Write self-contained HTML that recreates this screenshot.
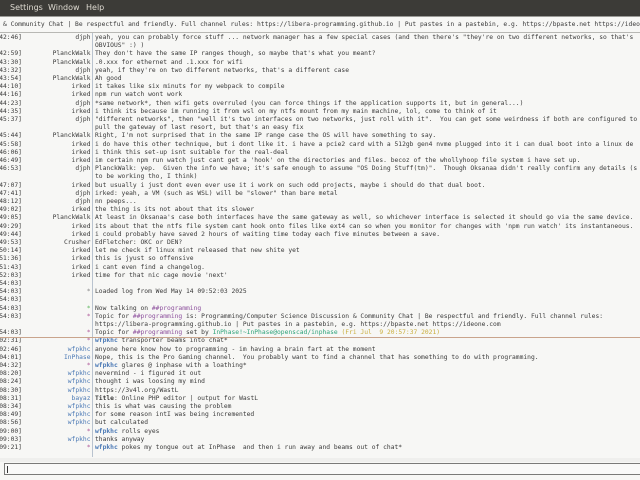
<!DOCTYPE html>
<html><head><meta charset="utf-8"><style>
*{margin:0;padding:0;box-sizing:border-box}
body{width:640px;height:480px;overflow:hidden;background:#f7f7f5;position:relative;font-family:"DejaVu Sans Mono","Liberation Mono",monospace;font-size:6.3px;color:#3a3a3a}
#menu{position:absolute;left:0;top:0;width:640px;height:16px;background:#3c3b37;color:#dfdbd2;font-family:"DejaVu Sans","Liberation Sans",sans-serif;font-size:8px;line-height:16px;white-space:nowrap}
#menu span{position:absolute;top:0}
#topic{position:absolute;left:0;top:16px;width:640px;height:17px;background:#f7f7f5;border-top:1px solid #9a9a96;border-bottom:1px solid #b8b8b4;line-height:15px;padding-left:3px;white-space:nowrap;overflow:hidden}
#div{position:absolute;left:92px;top:33px;width:1px;height:424px;background:#b9c3cf}
.r{position:absolute;left:0;height:8.2px;line-height:8.2px;white-space:pre;width:640px}
.t{position:absolute;left:-4.6px}
.n{position:absolute;right:549.5px;text-align:right}
.m{position:absolute;left:95px}
.b{color:#4b79b5}.bb{color:#4b79b5;font-weight:bold}
.p{color:#8c4f9c}.g{color:#2ea37a}.y{color:#c9ad3c}.gs{color:#5fb75f}.ps{color:#b05a9a}.gr{color:#888}
#marker{position:absolute;left:0;top:336.5px;width:640px;height:1px;background:#c9a48c}
#input{position:absolute;left:4px;top:463px;width:640px;height:12px;border:1px solid #7a7a78;border-right:none;background:#f9f9f8}
#input:before{content:"";position:absolute;left:2px;top:2px;width:1px;height:7px;background:#333}
#bot{position:absolute;left:0;top:458px;width:640px;height:4px;background:#efefed}
</style></head><body>
<div id="menu"><span style="left:-4px">r</span><span style="left:10px">Settings</span><span style="left:48px">Window</span><span style="left:86px">Help</span></div>
<div id="topic">&amp; Community Chat | Be respectful and friendly. Full channel rules: https://libera-programming.github.io | Put pastes in a pastebin, e.g. https://bpaste.net https://ideone.com</div>
<div id="div"></div>
<div id="rows">
<div class="r" style="top:34px"><span class="t">[42:46]</span><span class="n">djph</span><span class="m">yeah, you can probably force stuff ... network manager has a few special cases (and then there's "they're on two different networks, so that's</span></div>
<div class="r" style="top:42.2px"><span class="m">OBVIOUS" :) )</span></div>
<div class="r" style="top:50.4px"><span class="t">[42:59]</span><span class="n">PlanckWalk</span><span class="m">They don't have the same IP ranges though, so maybe that's what you meant?</span></div>
<div class="r" style="top:58.6px"><span class="t">[43:30]</span><span class="n">PlanckWalk</span><span class="m">.0.xxx for ethernet and .1.xxx for wifi</span></div>
<div class="r" style="top:66.8px"><span class="t">[43:32]</span><span class="n">djph</span><span class="m">yeah, if they're on two different networks, that's a different case</span></div>
<div class="r" style="top:75px"><span class="t">[43:54]</span><span class="n">PlanckWalk</span><span class="m">Ah good</span></div>
<div class="r" style="top:83.2px"><span class="t">[44:10]</span><span class="n">irked</span><span class="m">it takes like six minuts for my webpack to compile</span></div>
<div class="r" style="top:91.4px"><span class="t">[44:16]</span><span class="n">irked</span><span class="m">npm run watch wont work</span></div>
<div class="r" style="top:99.6px"><span class="t">[44:23]</span><span class="n">djph</span><span class="m">*same network*, then wifi gets overruled (you can force things if the application supports it, but in general...)</span></div>
<div class="r" style="top:107.8px"><span class="t">[44:35]</span><span class="n">irked</span><span class="m">i think its because im running it from wsl on my ntfs mount from my main machine, lol, come to think of it</span></div>
<div class="r" style="top:116px"><span class="t">[45:37]</span><span class="n">djph</span><span class="m">"different networks", then "well it's two interfaces on two networks, just roll with it".  You can get some weirdness if both are configured to</span></div>
<div class="r" style="top:124.2px"><span class="m">pull the gateway of last resort, but that's an easy fix</span></div>
<div class="r" style="top:132.4px"><span class="t">[45:44]</span><span class="n">PlanckWalk</span><span class="m">Right, I'm not surprised that in the same IP range case the OS will have something to say.</span></div>
<div class="r" style="top:140.6px"><span class="t">[45:58]</span><span class="n">irked</span><span class="m">i do have this other technique, but i dont like it. i have a pcie2 card with a 512gb gen4 nvme plugged into it i can dual boot into a linux de</span></div>
<div class="r" style="top:148.8px"><span class="t">[46:06]</span><span class="n">irked</span><span class="m">i think this set-up isnt suitable for the real-deal</span></div>
<div class="r" style="top:157px"><span class="t">[46:49]</span><span class="n">irked</span><span class="m">im certain npm run watch just cant get a 'hook' on the directories and files. becoz of the whollyhoop file system i have set up.</span></div>
<div class="r" style="top:165.2px"><span class="t">[46:53]</span><span class="n">djph</span><span class="m">PlanckWalk: yep.  Given the info we have; it's safe enough to assume "OS Doing Stuff(tm)".  Though Oksanaa didn't really confirm any details (s</span></div>
<div class="r" style="top:173.4px"><span class="m">to be working tho, I think)</span></div>
<div class="r" style="top:181.6px"><span class="t">[47:07]</span><span class="n">irked</span><span class="m">but usually i just dont even ever use it i work on such odd projects, maybe i should do that dual boot.</span></div>
<div class="r" style="top:189.8px"><span class="t">[47:41]</span><span class="n">djph</span><span class="m">irked: yeah, a VM (such as WSL) will be "slower" than bare metal</span></div>
<div class="r" style="top:198px"><span class="t">[48:12]</span><span class="n">djph</span><span class="m">nn peeps...</span></div>
<div class="r" style="top:206.2px"><span class="t">[49:02]</span><span class="n">irked</span><span class="m">the thing is its not about that its slower</span></div>
<div class="r" style="top:214.4px"><span class="t">[49:05]</span><span class="n">PlanckWalk</span><span class="m">At least in Oksanaa's case both interfaces have the same gateway as well, so whichever interface is selected it should go via the same device.</span></div>
<div class="r" style="top:222.6px"><span class="t">[49:29]</span><span class="n">irked</span><span class="m">its about that the ntfs file system cant hook onto files like ext4 can so when you monitor for changes with 'npm run watch' its instantaneous.</span></div>
<div class="r" style="top:230.8px"><span class="t">[49:44]</span><span class="n">irked</span><span class="m">i could probably have saved 2 hours of waiting time today each five minutes between a save.</span></div>
<div class="r" style="top:239px"><span class="t">[49:53]</span><span class="n">Crusher</span><span class="m">EdFletcher: OKC or DEN?</span></div>
<div class="r" style="top:247.2px"><span class="t">[50:14]</span><span class="n">irked</span><span class="m">let me check if linux mint released that new shite yet</span></div>
<div class="r" style="top:255.4px"><span class="t">[51:36]</span><span class="n">irked</span><span class="m">this is jyust so offensive</span></div>
<div class="r" style="top:263.6px"><span class="t">[51:43]</span><span class="n">irked</span><span class="m">i cant even find a changelog.</span></div>
<div class="r" style="top:271.8px"><span class="t">[52:03]</span><span class="n">irked</span><span class="m">time for that nic cage movie 'next'</span></div>
<div class="r" style="top:280px"><span class="t">[54:03]</span></div>
<div class="r" style="top:288.2px"><span class="t">[54:03]</span><span class="n gr">*</span><span class="m">Loaded log from Wed May 14 09:52:03 2025</span></div>
<div class="r" style="top:296.4px"><span class="t">[54:03]</span></div>
<div class="r" style="top:304.6px"><span class="t">[54:03]</span><span class="n gs">*</span><span class="m">Now talking on <span class="p">##programming</span></span></div>
<div class="r" style="top:312.8px"><span class="t">[54:03]</span><span class="n ps">*</span><span class="m">Topic for <span class="p">##programming</span> is: Programming/Computer Science Discussion &amp; Community Chat | Be respectful and friendly. Full channel rules:</span></div>
<div class="r" style="top:321px"><span class="m">https://libera-programming.github.io | Put pastes in a pastebin, e.g. https://bpaste.net https://ideone.com</span></div>
<div class="r" style="top:329.2px"><span class="t">[54:03]</span><span class="n ps">*</span><span class="m">Topic for <span class="p">##programming</span> set by <span class="g">InPhase!~InPhase@openscad/inphase</span> <span class="y">(Fri Jul  9 20:57:37 2021)</span></span></div>
<div class="r" style="top:337.4px"><span class="t">[02:31]</span><span class="n ps">*</span><span class="m"><span class="bb">wfpkhc</span> transporter beams into chat*</span></div>
<div class="r" style="top:345.6px"><span class="t">[02:46]</span><span class="n b">wfpkhc</span><span class="m">anyone here know how to programming - im having a brain fart at the moment</span></div>
<div class="r" style="top:353.8px"><span class="t">[04:01]</span><span class="n b">InPhase</span><span class="m">Nope, this is the Pro Gaming channel.  You probably want to find a channel that has something to do with programming.</span></div>
<div class="r" style="top:362px"><span class="t">[04:32]</span><span class="n ps">*</span><span class="m"><span class="bb">wfpkhc</span> glares @ inphase with a loathing*</span></div>
<div class="r" style="top:370.2px"><span class="t">[08:20]</span><span class="n b">wfpkhc</span><span class="m">nevermind - i figured it out</span></div>
<div class="r" style="top:378.4px"><span class="t">[08:24]</span><span class="n b">wfpkhc</span><span class="m">thought i was loosing my mind</span></div>
<div class="r" style="top:386.6px"><span class="t">[08:30]</span><span class="n b">wfpkhc</span><span class="m">https://3v4l.org/WastL</span></div>
<div class="r" style="top:394.8px"><span class="t">[08:31]</span><span class="n b">bayaz</span><span class="m"><b>Title</b>: Online PHP editor | output for WastL</span></div>
<div class="r" style="top:403px"><span class="t">[08:34]</span><span class="n b">wfpkhc</span><span class="m">this is what was causing the problem</span></div>
<div class="r" style="top:411.2px"><span class="t">[08:49]</span><span class="n b">wfpkhc</span><span class="m">for some reason intI was being incremented</span></div>
<div class="r" style="top:419.4px"><span class="t">[08:56]</span><span class="n b">wfpkhc</span><span class="m">but calculated</span></div>
<div class="r" style="top:427.6px"><span class="t">[09:00]</span><span class="n ps">*</span><span class="m"><span class="bb">wfpkhc</span> rolls eyes</span></div>
<div class="r" style="top:435.8px"><span class="t">[09:03]</span><span class="n b">wfpkhc</span><span class="m">thanks anyway</span></div>
<div class="r" style="top:444px"><span class="t">[09:21]</span><span class="n ps">*</span><span class="m"><span class="bb">wfpkhc</span> pokes my tongue out at InPhase  and then i run away and beams out of chat*</span></div>
</div>
<div id="marker"></div>
<div id="bot"></div>
<div id="input"></div>
</body></html>
